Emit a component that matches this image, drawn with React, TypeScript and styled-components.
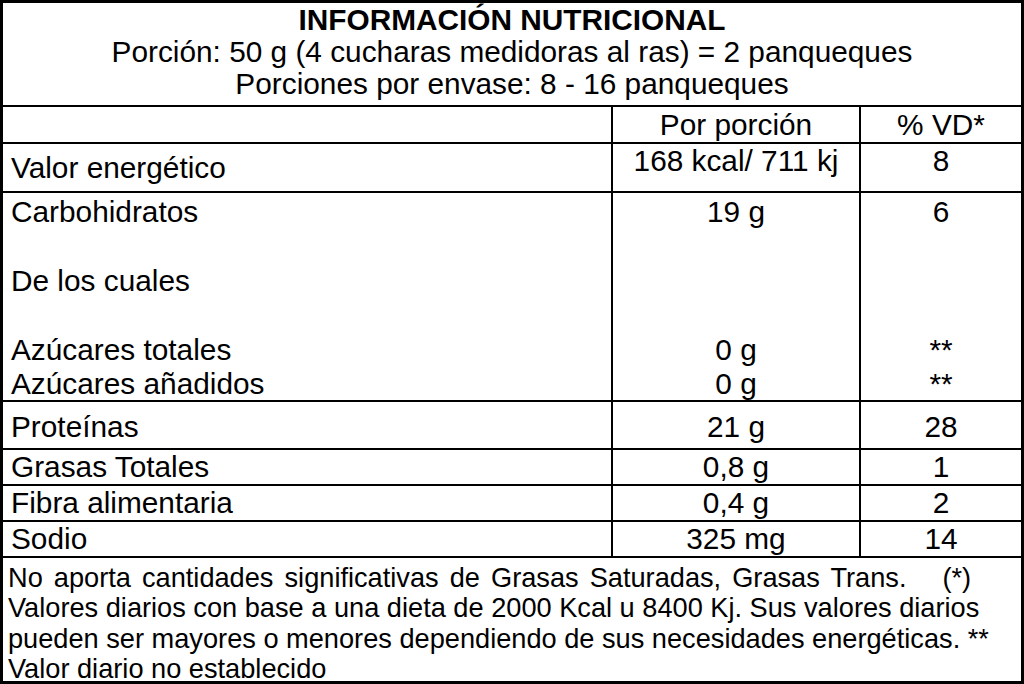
import React from 'react';
import styled, { createGlobalStyle } from 'styled-components';

const GlobalStyle = createGlobalStyle`
  html, body {
    margin: 0;
    padding: 0;
    background: #ffffff;
  }
  body {
    font-family: "Liberation Sans", Arial, sans-serif;
    color: #000;
  }
`;

const Label = styled.div`
  width: 1024px;
  height: 684px;
  box-sizing: border-box;
  border: 3px solid #000;
  display: flex;
  flex-direction: column;
  font-size: 29.8px;
  background: #fff;
`;

const Header = styled.div`
  height: 102px;
  flex: none;
  box-sizing: border-box;
  padding-top: 1px;
  display: flex;
  flex-direction: column;
  align-items: center;
  line-height: 32px;
`;

const Title = styled.div`
  font-weight: 700;
`;

// one table row: $pad pushes every cell's text down from the rule above
const Row = styled.div<{ $h: number; $pad: number }>`
  height: ${(p) => p.$h}px;
  flex: none;
  box-sizing: border-box;
  border-top: 2px solid #000;
  display: grid;
  grid-template-columns: 608px 248px 1fr;
  line-height: 32px;

  & > div {
    box-sizing: border-box;
    padding-top: ${(p) => p.$pad}px;
  }
`;

const Name = styled.div<{ $top?: boolean }>`
  padding-left: 8px;
  display: flex;
  flex-direction: column;
  justify-content: ${(p) => (p.$top ? 'flex-start' : 'center')};
`;

const Value = styled.div<{ $top?: boolean }>`
  border-left: 2px solid #000;
  display: flex;
  flex-direction: column;
  align-items: center;
  justify-content: ${(p) => (p.$top ? 'flex-start' : 'center')};
`;

const Line = styled.div`
  line-height: 34.4px;
  min-height: 34.4px;
`;

const Footer = styled.div`
  flex: 1 1 0;
  min-height: 0;
  box-sizing: border-box;
  border-top: 2px solid #000;
  padding: 5px 0 0 5px;
  font-size: 27.2px;
  line-height: 30.4px;
  white-space: nowrap;
`;

const FirstNote = styled.div`
  word-spacing: 3.5px;
`;

const Mark = styled.span`
  margin-left: 36px;
`;

const rows = [
  { name: 'Proteínas', value: '21 g', vd: '28', h: 48, pad: 4 },
  { name: 'Grasas Totales', value: '0,8 g', vd: '1', h: 36, pad: 0 },
  { name: 'Fibra alimentaria', value: '0,4 g', vd: '2', h: 36, pad: 0 },
  { name: 'Sodio', value: '325 mg', vd: '14', h: 36, pad: 0 },
];

const carbLines = [
  { name: 'Carbohidratos', value: '19 g', vd: '6' },
  { name: '', value: '', vd: '' },
  { name: 'De los cuales', value: '', vd: '' },
  { name: '', value: '', vd: '' },
  { name: 'Azúcares totales', value: '0 g', vd: '**' },
  { name: 'Azúcares añadidos', value: '0 g', vd: '**' },
];

export default function App() {
  return (
    <>
      <GlobalStyle />
      <Label>
        <Header>
          <Title>INFORMACIÓN NUTRICIONAL</Title>
          <div>Porción: 50 g (4 cucharas medidoras al ras) = 2 panqueques</div>
          <div>Porciones por envase: 8 - 16 panqueques</div>
        </Header>

        <Row $h={37} $pad={2}>
          <Name $top />
          <Value $top>Por porción</Value>
          <Value $top>% VD*</Value>
        </Row>

        <Row $h={49} $pad={1}>
          <Name style={{ paddingTop: 0 }}>Valor energético</Name>
          <Value $top>168 kcal/ 711 kj</Value>
          <Value $top>8</Value>
        </Row>

        <Row $h={209} $pad={2}>
          <Name $top>
            {carbLines.map((l, i) => (
              <Line key={i}>{l.name}</Line>
            ))}
          </Name>
          <Value $top>
            {carbLines.map((l, i) => (
              <Line key={i}>{l.value}</Line>
            ))}
          </Value>
          <Value $top>
            {carbLines.map((l, i) => (
              <Line key={i}>{l.vd}</Line>
            ))}
          </Value>
        </Row>

        {rows.map((r) => (
          <Row key={r.name} $h={r.h} $pad={r.pad}>
            <Name>{r.name}</Name>
            <Value>{r.value}</Value>
            <Value>{r.vd}</Value>
          </Row>
        ))}

        <Footer>
          <FirstNote>
            No aporta cantidades significativas de Grasas Saturadas, Grasas Trans.<Mark>(*)</Mark>
          </FirstNote>
          <div>Valores diarios con base a una dieta de 2000 Kcal u 8400 Kj. Sus valores diarios</div>
          <div>pueden ser mayores o menores dependiendo de sus necesidades energéticas. **</div>
          <div>Valor diario no establecido</div>
        </Footer>
      </Label>
    </>
  );
}
